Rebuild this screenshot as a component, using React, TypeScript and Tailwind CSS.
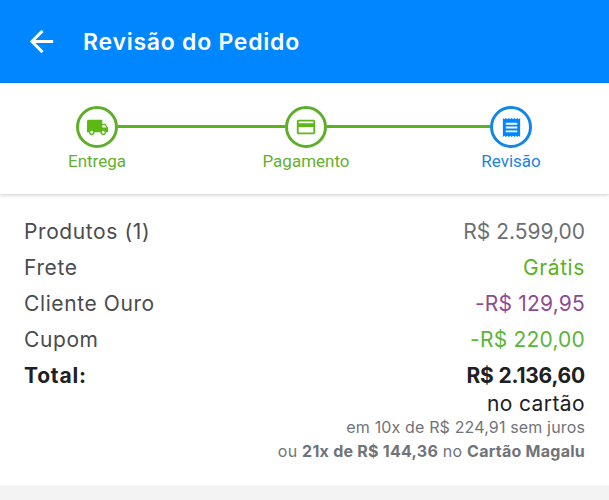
const GREEN = "#5cb814";

function Step({ label, color, children }: { label: string; color: "green" | "blue"; children: React.ReactNode }) {
  const ring = color === "green" ? "border-[#5fae2a]" : "border-[#0f86e8]";
  const text = color === "green" ? "text-[#64b02f]" : "text-[#1c84dc]";
  return (
    <div className="flex w-[42px] flex-col items-center">
      <div className={`flex h-[42px] w-[42px] items-center justify-center rounded-full border-[3px] ${ring}`}>{children}</div>
      <span className={`mt-[1px] whitespace-nowrap text-[17px] leading-[24px] ${text}`} style={{ fontFamily: "Roboto, sans-serif" }}>
        {label}
      </span>
    </div>
  );
}

function Row({ label, value, valueClass }: { label: string; value: string; valueClass: string }) {
  return (
    <div className="flex h-[36px] items-center justify-between">
      <span className="tracking-[0.6px] text-[#4b4b4d]">{label}</span>
      <span className={valueClass}>{value}</span>
    </div>
  );
}

export default function App() {
  return (
    <div className="h-[500px] w-[609px] overflow-hidden bg-white" style={{ fontFamily: "Inter, sans-serif" }}>
      <header className="flex h-[83px] items-center bg-[#0086ff] pl-[24px] text-white">
        <svg width="35" height="35" viewBox="0 0 24 24" fill="#fff">
          <path d="M20 11H7.83l5.59-5.59L12 4l-8 8 8 8 1.41-1.41L7.83 13H20v-2z" />
        </svg>
        <h1 className="ml-[24px] pt-[1px] text-[23px] font-semibold tracking-[0.75px]">Revisão do Pedido</h1>
      </header>

      <section className="relative h-[111px] bg-white pt-[23px] shadow-[0_1px_4px_rgba(0,0,0,0.2)]">
        <div className="flex items-start pl-[76px]">
          <Step label="Entrega" color="green">
            <svg width="23" height="23" viewBox="0 0 24 24" fill={GREEN}>
              <path d="M20 8h-3V4H3c-1.1 0-2 .9-2 2v11h2c0 1.66 1.34 3 3 3s3-1.34 3-3h6c0 1.66 1.34 3 3 3s3-1.34 3-3h2v-5l-3-4zM6 18.5c-.83 0-1.5-.67-1.5-1.5s.67-1.5 1.5-1.5 1.5.67 1.5 1.5-.67 1.5-1.5 1.5zm13.5-9l1.96 2.5H17V9.5h2.5zm-1.5 9c-.83 0-1.5-.67-1.5-1.5s.67-1.5 1.5-1.5 1.5.67 1.5 1.5-.67 1.5-1.5 1.5z" />
            </svg>
          </Step>
          <div className="mt-[19px] h-[3px] w-[167px] bg-[#5cb320]" />
          <Step label="Pagamento" color="green">
            <svg width="22" height="22" viewBox="0 0 24 24" fill={GREEN}>
              <path d="M20 4H4c-1.11 0-1.99.89-1.99 2L2 18c0 1.11.89 2 2 2h16c1.11 0 2-.89 2-2V6c0-1.11-.89-2-2-2zm0 14H4v-6h16v6zm0-10H4V6h16v2z" />
            </svg>
          </Step>
          <div className="mt-[19px] h-[3px] w-[163px] bg-[#5cb320]" />
          <Step label="Revisão" color="blue">
            <svg width="23" height="23" viewBox="0 0 24 24" fill="#0086ff">
              <path d="M18 17H6v-2h12v2zm0-4H6v-2h12v2zm0-4H6V7h12v2zM3 22l1.5-1.5L6 22l1.5-1.5L9 22l1.5-1.5L12 22l1.5-1.5L15 22l1.5-1.5L18 22l1.5-1.5L21 22V2l-1.5 1.5L18 2l-1.5 1.5L15 2l-1.5 1.5L12 2l-1.5 1.5L9 2 7.5 3.5 6 2 4.5 3.5 3 2v20z" />
            </svg>
          </Step>
        </div>
      </section>

      <section className="h-[291px] px-[24px] pt-[20px] text-[21px]">
        <Row label="Produtos (1)" value="R$ 2.599,00" valueClass="text-[#6b7073]" />
        <Row label="Frete" value="Grátis" valueClass="tracking-[0.6px] text-[#5ab21e]" />
        <Row label="Cliente Ouro" value="-R$ 129,95" valueClass="tracking-[0.2px] text-[#8f4a92]" />
        <Row label="Cupom" value="-R$ 220,00" valueClass="tracking-[0.2px] text-[#5ab53a]" />
        <div className="flex h-[36px] items-center justify-between font-bold text-[#1d2124]">
          <span className="tracking-[0.8px]">Total:</span>
          <span className="tracking-[-0.2px]">R$ 2.136,60</span>
        </div>
        <div className="flex flex-col items-end">
          <span className="leading-[20px] tracking-[0.4px] text-[#1d2124]">no cartão</span>
          <span className="mt-[2px] text-[16px] leading-[22px] tracking-[0.15px] text-[#707478]">em 10x de R$ 224,91 sem juros</span>
          <span className="mt-[2px] text-[16px] leading-[22px] tracking-[0.25px] text-[#707478]">
            ou <b className="font-bold">21x de R$ 144,36</b> no <b className="font-bold">Cartão Magalu</b>
          </span>
        </div>
      </section>

      <div className="h-[15px] bg-[#f3f3f3]" />
    </div>
  );
}
